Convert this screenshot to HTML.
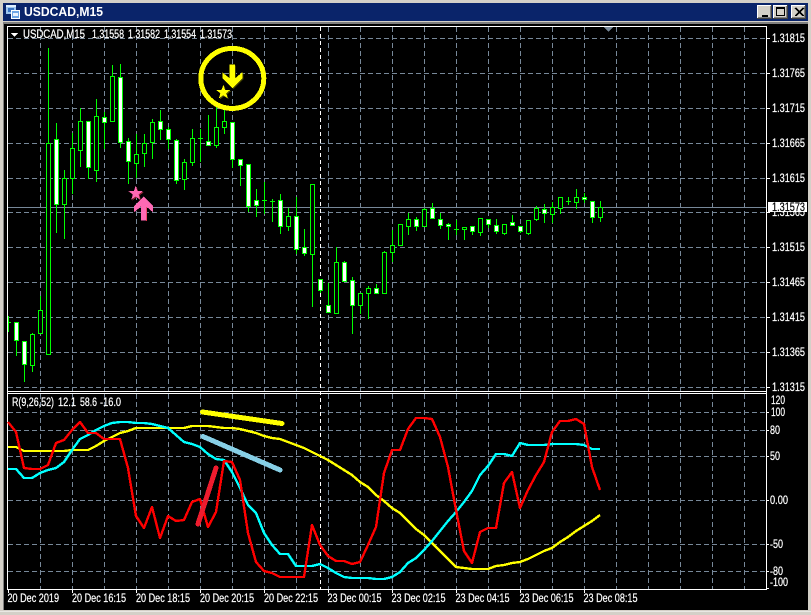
<!DOCTYPE html>
<html><head><meta charset="utf-8"><title>USDCAD,M15</title>
<style>
html,body{margin:0;padding:0;background:#000;width:811px;height:615px;overflow:hidden}
svg{display:block}
text{font-family:"Liberation Sans",sans-serif;font-size:11.5px;fill:#fff;stroke:#fff;stroke-width:.22px}
</style></head><body>
<svg width="811" height="615" viewBox="0 0 811 615" xmlns="http://www.w3.org/2000/svg" shape-rendering="crispEdges">
<!-- window chrome -->
<rect width="811" height="615" fill="#d4d0c8"/>
<rect x="3" y="3" width="805" height="18" fill="#0a246a"/>
<rect x="3" y="21" width="805" height="1" fill="#d4d0c8"/>
<rect x="3" y="22" width="805" height="2" fill="#808080"/>
<rect x="3" y="24" width="805" height="586" fill="#808080"/>
<rect x="4" y="24" width="804" height="586" fill="#000"/>
<rect x="0" y="611" width="811" height="1" fill="#fff" opacity=".5"/>
<!-- title icon -->
<rect x="6" y="5" width="10" height="9" fill="#9ec5ee"/><rect x="6" y="5" width="10" height="2" fill="#dfefff"/><rect x="8" y="8" width="6" height="4" fill="#3a74c4"/>
<rect x="11" y="10" width="9" height="9" fill="#fff"/><rect x="12" y="11" width="7" height="7" fill="#6fa6e6"/><rect x="13" y="13" width="5" height="3" fill="#eaf3ff"/>
<text x="24" y="16" style="font-size:13px;font-weight:700;stroke:none" textLength="79" lengthAdjust="spacingAndGlyphs">USDCAD,M15</text>
<!-- window buttons -->
<g>
<rect x="757" y="5" width="15" height="14" fill="#404040"/><rect x="757" y="5" width="14" height="13" fill="#fff"/><rect x="758" y="6" width="13" height="12" fill="#808080"/><rect x="758" y="6" width="12" height="11" fill="#d4d0c8"/>
<rect x="762" y="15" width="6" height="2" fill="#000"/>
<rect x="773" y="5" width="15" height="14" fill="#404040"/><rect x="773" y="5" width="14" height="13" fill="#fff"/><rect x="774" y="6" width="13" height="12" fill="#808080"/><rect x="774" y="6" width="12" height="11" fill="#d4d0c8"/>
<rect x="776" y="7" width="9" height="2" fill="#000"/><rect x="776" y="7" width="1" height="9" fill="#000"/><rect x="784" y="7" width="1" height="9" fill="#000"/><rect x="776" y="15" width="9" height="1" fill="#000"/>
<rect x="791" y="5" width="15" height="14" fill="#404040"/><rect x="791" y="5" width="14" height="13" fill="#fff"/><rect x="792" y="6" width="13" height="12" fill="#808080"/><rect x="792" y="6" width="12" height="11" fill="#d4d0c8"/>
<path d="M795 8l8 8M796 8l8 8M803 8l-8 8M804 8l-8 8" stroke="#000" fill="none" stroke-width="1"/>
</g>
<!-- grid horizontal -->
<path d="M8 38.5H766M8 73.5H766M8 108.5H766M8 143.5H766M8 178.5H766M8 212.5H766M8 247.5H766M8 282.5H766M8 317.5H766M8 352.5H766M8 387.5H766M8 412.5H766M8 430.5H766M8 456.5H766M8 500.5H766M8 544.5H766M8 571.5H766" stroke="#778899" stroke-dasharray="5 3" fill="none"/>
<!-- grid vertical -->
<path d="M40.5 27V391M72.5 27V391M104.5 27V391M136.5 27V391M168.5 27V391M200.5 27V391M232.5 27V391M264.5 27V391M296.5 27V391M328.5 27V391M360.5 27V391M392.5 27V391M424.5 27V391M456.5 27V391M488.5 27V391M520.5 27V391M552.5 27V391M584.5 27V391M616.5 27V391M648.5 27V391M680.5 27V391M712.5 27V391M744.5 27V391M40.5 394V589M72.5 394V589M104.5 394V589M136.5 394V589M168.5 394V589M200.5 394V589M232.5 394V589M264.5 394V589M296.5 394V589M328.5 394V589M360.5 394V589M392.5 394V589M424.5 394V589M456.5 394V589M488.5 394V589M520.5 394V589M552.5 394V589M584.5 394V589M616.5 394V589M648.5 394V589M680.5 394V589M712.5 394V589M744.5 394V589" stroke="#778899" stroke-dasharray="5 3" fill="none"/>
<!-- period separator -->
<path d="M320.5 27V589" stroke="#fff" stroke-dasharray="4 3" fill="none"/>
<!-- current price line -->
<path d="M8 207.5H766" stroke="#778899" fill="none"/>
<!-- frames -->
<path d="M7.5 26.5H766.5V589.5H7.5ZM7 391.5H767M7 393.5H767" stroke="#fff" fill="none"/>
<path d="M767 38.5h3M767 73.5h3M767 108.5h3M767 143.5h3M767 178.5h3M767 212.5h3M767 247.5h3M767 282.5h3M767 317.5h3M767 352.5h3M767 387.5h3M767 412.5h2M767 430.5h2M767 456.5h2M767 500.5h2M767 544.5h2M767 571.5h2M767 588.5h2M8.5 590v3M72.5 590v3M136.5 590v3M200.5 590v3M264.5 590v3M328.5 590v3M392.5 590v3M456.5 590v3M520.5 590v3M584.5 590v3" stroke="#fff" fill="none"/>
<polygon points="604,27 613,27 608.5,32" fill="#778899"/>
<!-- wicks -->
<path stroke="#00ff00" fill="none" d="M8.5 316V332M8 322.5H11M16.5 322V356M24.5 341V382M32.5 333V372M40.5 296V334M48.5 48V355M56.5 123V233M64.5 170V239M72.5 133V194M80.5 108V167M88.5 121V179M96.5 99V182M104.5 112V149M112.5 65V122M120.5 64V148M128.5 138V184M136.5 134V178M144.5 134V167M152.5 119V159M160.5 110V140M168.5 127V149M176.5 139V184M184.5 159V190M192.5 129V166M200.5 129V162M198 138.5H203M208.5 115V146M216.5 107V148M224.5 110V134M232.5 122V168M240.5 159V186M248.5 164V212M256.5 189V217M264.5 182V214M262 200.5H267M272.5 199V222M270 201.5H275M280.5 194V234M288.5 208V231M296.5 197V254M304.5 229V256M312.5 184V307M320.5 279V293M328.5 283V313M336.5 247V314M344.5 261V282M352.5 277V334M360.5 293V314M368.5 286V319M376.5 284V294M384.5 251V294M392.5 230V262M400.5 224V246M408.5 213V235M416.5 217V231M424.5 208V227M432.5 203V219M440.5 213V229M448.5 223V240M456.5 220V235M454 229.5H459M464.5 227V240M472.5 226V235M480.5 218V236M488.5 219V228M496.5 219V234M504.5 224V235M512.5 215V226M520.5 226V233M528.5 220V235M536.5 206V221M544.5 204V223M552.5 202V223M560.5 197V214M568.5 197V205M566 201.5H571M576.5 189V209M584.5 193V203M592.5 201V223M600.5 201V222"/>
<!-- candle outer bodies -->
<path stroke="#00ff00" stroke-width="5" fill="none" d="M16.5 322V341M24.5 341V365M32.5 334V366M40.5 310V334M48.5 143V355M56.5 139V205M64.5 178V205M72.5 148V179M80.5 121V151M88.5 121V168M96.5 116V171M104.5 117V123M112.5 76V122M120.5 77V143M128.5 141V162M136.5 154V164M144.5 143V154M152.5 122V143M160.5 121V130M168.5 129V140M176.5 140V181M184.5 162V180M192.5 138V163M208.5 141V146M216.5 127V146M224.5 121V128M232.5 122V160M240.5 159V166M248.5 164V207M256.5 200V206M280.5 200V227M288.5 216V227M296.5 216V250M304.5 247V254M312.5 184V255M320.5 279V291M328.5 305V313M336.5 262V314M344.5 262V282M352.5 280V306M360.5 293V306M368.5 288V294M376.5 288V294M384.5 252V294M392.5 245V253M400.5 224V246M408.5 219V227M416.5 219V227M424.5 209V227M432.5 208V219M440.5 219V226M448.5 224V227M464.5 227V230M472.5 226V232M480.5 218V233M488.5 219V225M496.5 225V232M504.5 224V234M512.5 222V226M520.5 226V232M528.5 220V234M536.5 208V220M544.5 209V214M552.5 207V215M560.5 197V209M576.5 197V203M584.5 197V200M592.5 201V218M600.5 207V218"/>
<!-- hollow inner -->
<path stroke="#000" stroke-width="3" fill="none" d="M32.5 335V365M40.5 311V333M48.5 144V354M64.5 179V204M72.5 149V178M80.5 122V150M96.5 117V170M112.5 77V121M136.5 155V163M144.5 144V153M152.5 123V142M184.5 163V179M192.5 139V162M216.5 128V145M224.5 122V127M288.5 217V226M312.5 185V254M336.5 263V313M360.5 294V305M368.5 289V293M384.5 253V293M392.5 246V252M400.5 225V245M408.5 220V226M424.5 210V226M464.5 228V229M480.5 219V232M504.5 225V233M528.5 221V233M536.5 209V219M552.5 208V214M560.5 198V208M576.5 198V202M600.5 208V217"/>
<!-- filled inner -->
<path stroke="#fff" stroke-width="3" fill="none" d="M16.5 323V340M24.5 342V364M56.5 140V204M88.5 122V167M104.5 118V122M120.5 78V142M128.5 142V161M160.5 122V129M168.5 130V139M176.5 141V180M208.5 142V145M232.5 123V159M240.5 160V165M248.5 165V206M256.5 201V205M280.5 201V226M296.5 217V249M304.5 248V253M320.5 280V290M328.5 306V312M344.5 263V281M352.5 281V305M376.5 289V293M416.5 220V226M432.5 209V218M440.5 220V225M448.5 225V226M472.5 227V231M488.5 220V224M496.5 226V231M512.5 223V225M520.5 227V231M544.5 210V213M584.5 198V199M592.5 202V217"/>
<!-- marks main window -->
<ellipse cx="232.3" cy="78.4" rx="31.5" ry="30" fill="none" stroke="#ffff00" stroke-width="5"/>
<polygon points="230.7,65.3 236,65.3 236,79.3 243.3,73.3 243.3,79.3 233.3,89.3 223.3,79.3 223.3,73.3 230.7,79.3" fill="#3a3a00"/>
<polygon points="229.7,64.3 235,64.3 235,78.3 242.3,72.3 242.3,78.3 232.3,88.3 222.3,78.3 222.3,72.3 229.7,78.3" fill="#ffff00"/>
<polygon points="223.3,84.8 225.1,89.9 230.4,90 226.2,93.2 227.7,98.4 223.3,95.3 218.9,98.4 220.4,93.2 216.2,90 221.5,89.9" fill="#4a4a00" transform="translate(1,1)"/>
<polygon points="223.3,84.8 225.1,89.9 230.4,90 226.2,93.2 227.7,98.4 223.3,95.3 218.9,98.4 220.4,93.2 216.2,90 221.5,89.9" fill="#ffff00"/>
<polygon points="223.3,84.8 225.1,89.9 230.4,90 226.2,93.2 227.7,98.4 223.3,95.3 218.9,98.4 220.4,93.2 216.2,90 221.5,89.9" fill="#8a2030" transform="translate(-86.6,102.2)"/>
<polygon points="223.3,84.8 225.1,89.9 230.4,90 226.2,93.2 227.7,98.4 223.3,95.3 218.9,98.4 220.4,93.2 216.2,90 221.5,89.9" fill="#ff69b4" transform="translate(-87.6,101.2)"/>
<rect x="146" y="207" width="1" height="14" fill="#e02020"/>
<polygon points="143.7,196.7 153,206 153,212.3 146.3,206.5 146.3,220.7 141,220.7 141,206.5 134,212.3 134,206" fill="#ff69b4"/>
<!-- indicator lines -->
<g fill="none" stroke-width="2.4" stroke-linejoin="round">
<polyline stroke="#ffff00" points="8,447 16,447 24,451 32,451 40,451 48,451 56,451 64,451 72,450 80,450 88,450 96,446 104,441 112,437 120,433 128,431 136,428 144,428 152,428 160,428 168,428 176,428 184,428 192,426 200,426 208,426 216,427 224,428 232,428 240,429 248,431 256,433 264,436 272,438 280,439 288,442 296,445 304,448 312,452 320,456 328,460 336,465 344,470 352,475 360,482 368,487 376,495 384,501 392,508 400,513 408,521 416,529 424,535 432,543 440,551 448,559 456,567 464,568 472,569 480,569 488,569 496,566 504,565 512,563 520,562 528,559 536,555 544,551 552,548 560,542 568,537 576,531 584,526 592,521 600,515"/>
<polyline stroke="#00ffff" points="8,469 16,469 24,478 32,478 40,473 48,470 56,468 64,462 72,450 80,439 88,435 96,430 104,426 112,423 120,422 128,422 136,423 144,423 152,424 160,426 168,428 176,435 184,442 192,444 200,447 208,454 216,459 224,460 232,472 240,488 248,505 256,513 264,533 272,545 280,554 288,554 296,566 304,566 312,566 320,564 328,568 336,573 344,577 352,578 360,578 368,578 376,579 384,579 392,577 400,572 408,563 416,558 424,550 432,541 440,531 448,521 456,512 464,502 472,491 480,475 488,466 496,454 504,454 512,456 520,443 528,445 536,445 544,445 552,444 560,444 568,444 576,444 584,445 592,449 600,449"/>
<polyline stroke="#ff0000" points="8,422 16,432 24,468 32,469 40,469 48,465 56,443 64,440 72,430 80,422 88,433 96,433 104,439 112,439 120,439 128,468 136,516 144,528 152,507 160,538 168,516 176,521 184,520 192,502 200,499 208,527 216,512 224,461 232,462 240,480 248,533 256,562 264,571 272,573 280,577 288,577 296,577 304,577 312,525 320,545 328,556 336,561 344,561 352,564 360,562 368,545 376,527 384,473 392,450 400,450 408,429 416,418 424,418 432,419 440,437 448,467 456,510 464,551 472,563 480,532 488,528 496,528 504,483 512,472 520,508 528,490 536,475 544,462 552,432 560,421 568,421 576,419 584,424 592,467 600,490"/>
</g>
<!-- hand-drawn -->
<g fill="none" stroke-width="5" stroke-linecap="round">
<path stroke="#ffff00" d="M202.5 412L282 423.5"/>
<path stroke="#87cfe6" d="M203 436.5L280 470"/>
<path stroke="#ee1c2e" d="M198 524L216 468"/>
</g>
<!-- legend -->
<polygon points="11,33 18,33 14.5,37" fill="#fff"/>
<text x="23" y="38" textLength="62" lengthAdjust="spacingAndGlyphs">USDCAD,M15</text>
<text x="92" y="38" textLength="32" lengthAdjust="spacingAndGlyphs">1.31558</text>
<text x="128" y="38" textLength="32" lengthAdjust="spacingAndGlyphs">1.31582</text>
<text x="164" y="38" textLength="32" lengthAdjust="spacingAndGlyphs">1.31554</text>
<text x="200" y="38" textLength="32" lengthAdjust="spacingAndGlyphs">1.31573</text>
<text x="12" y="406" textLength="42" lengthAdjust="spacingAndGlyphs">R(9,26,52)</text>
<text x="58" y="406" textLength="18" lengthAdjust="spacingAndGlyphs">12.1</text>
<text x="80" y="406" textLength="17" lengthAdjust="spacingAndGlyphs">58.6</text>
<text x="100" y="406" textLength="21" lengthAdjust="spacingAndGlyphs">-16.0</text>
<!-- price axis -->
<text x="772" y="42" textLength="33" lengthAdjust="spacingAndGlyphs">1.31815</text>
<text x="772" y="77" textLength="33" lengthAdjust="spacingAndGlyphs">1.31765</text>
<text x="772" y="112" textLength="33" lengthAdjust="spacingAndGlyphs">1.31715</text>
<text x="772" y="147" textLength="33" lengthAdjust="spacingAndGlyphs">1.31665</text>
<text x="772" y="182" textLength="33" lengthAdjust="spacingAndGlyphs">1.31615</text>
<text x="772" y="216" textLength="33" lengthAdjust="spacingAndGlyphs">1.31565</text>
<rect x="768" y="202" width="39" height="10" fill="#fff"/>
<text x="772" y="211" textLength="33" lengthAdjust="spacingAndGlyphs" style="fill:#000;stroke:#000">1.31573</text>
<text x="772" y="251" textLength="33" lengthAdjust="spacingAndGlyphs">1.31515</text>
<text x="772" y="286" textLength="33" lengthAdjust="spacingAndGlyphs">1.31465</text>
<text x="772" y="321" textLength="33" lengthAdjust="spacingAndGlyphs">1.31415</text>
<text x="772" y="356" textLength="33" lengthAdjust="spacingAndGlyphs">1.31365</text>
<text x="772" y="391" textLength="33" lengthAdjust="spacingAndGlyphs">1.31315</text>
<!-- indicator axis -->
<text x="771" y="404" textLength="14" lengthAdjust="spacingAndGlyphs">120</text>
<text x="771" y="416" textLength="14" lengthAdjust="spacingAndGlyphs">100</text>
<text x="770" y="434" textLength="10" lengthAdjust="spacingAndGlyphs">80</text>
<text x="770" y="460" textLength="10" lengthAdjust="spacingAndGlyphs">50</text>
<text x="770" y="504" textLength="18" lengthAdjust="spacingAndGlyphs">0.00</text>
<text x="770" y="548" textLength="13" lengthAdjust="spacingAndGlyphs">-50</text>
<text x="770" y="575" textLength="13" lengthAdjust="spacingAndGlyphs">-80</text>
<text x="770" y="586" textLength="18" lengthAdjust="spacingAndGlyphs">-100</text>
<!-- time axis -->
<text x="7.5" y="602" textLength="51.5" lengthAdjust="spacingAndGlyphs">20 Dec 2019</text>
<text x="72" y="602" textLength="54" lengthAdjust="spacingAndGlyphs">20 Dec 16:15</text>
<text x="136" y="602" textLength="54" lengthAdjust="spacingAndGlyphs">20 Dec 18:15</text>
<text x="200" y="602" textLength="54" lengthAdjust="spacingAndGlyphs">20 Dec 20:15</text>
<text x="264" y="602" textLength="54" lengthAdjust="spacingAndGlyphs">20 Dec 22:15</text>
<text x="327.5" y="602" textLength="54" lengthAdjust="spacingAndGlyphs">23 Dec 00:15</text>
<text x="391.5" y="602" textLength="54" lengthAdjust="spacingAndGlyphs">23 Dec 02:15</text>
<text x="455.5" y="602" textLength="54" lengthAdjust="spacingAndGlyphs">23 Dec 04:15</text>
<text x="519.5" y="602" textLength="54" lengthAdjust="spacingAndGlyphs">23 Dec 06:15</text>
<text x="583.5" y="602" textLength="54" lengthAdjust="spacingAndGlyphs">23 Dec 08:15</text>
</svg>
</body></html>
